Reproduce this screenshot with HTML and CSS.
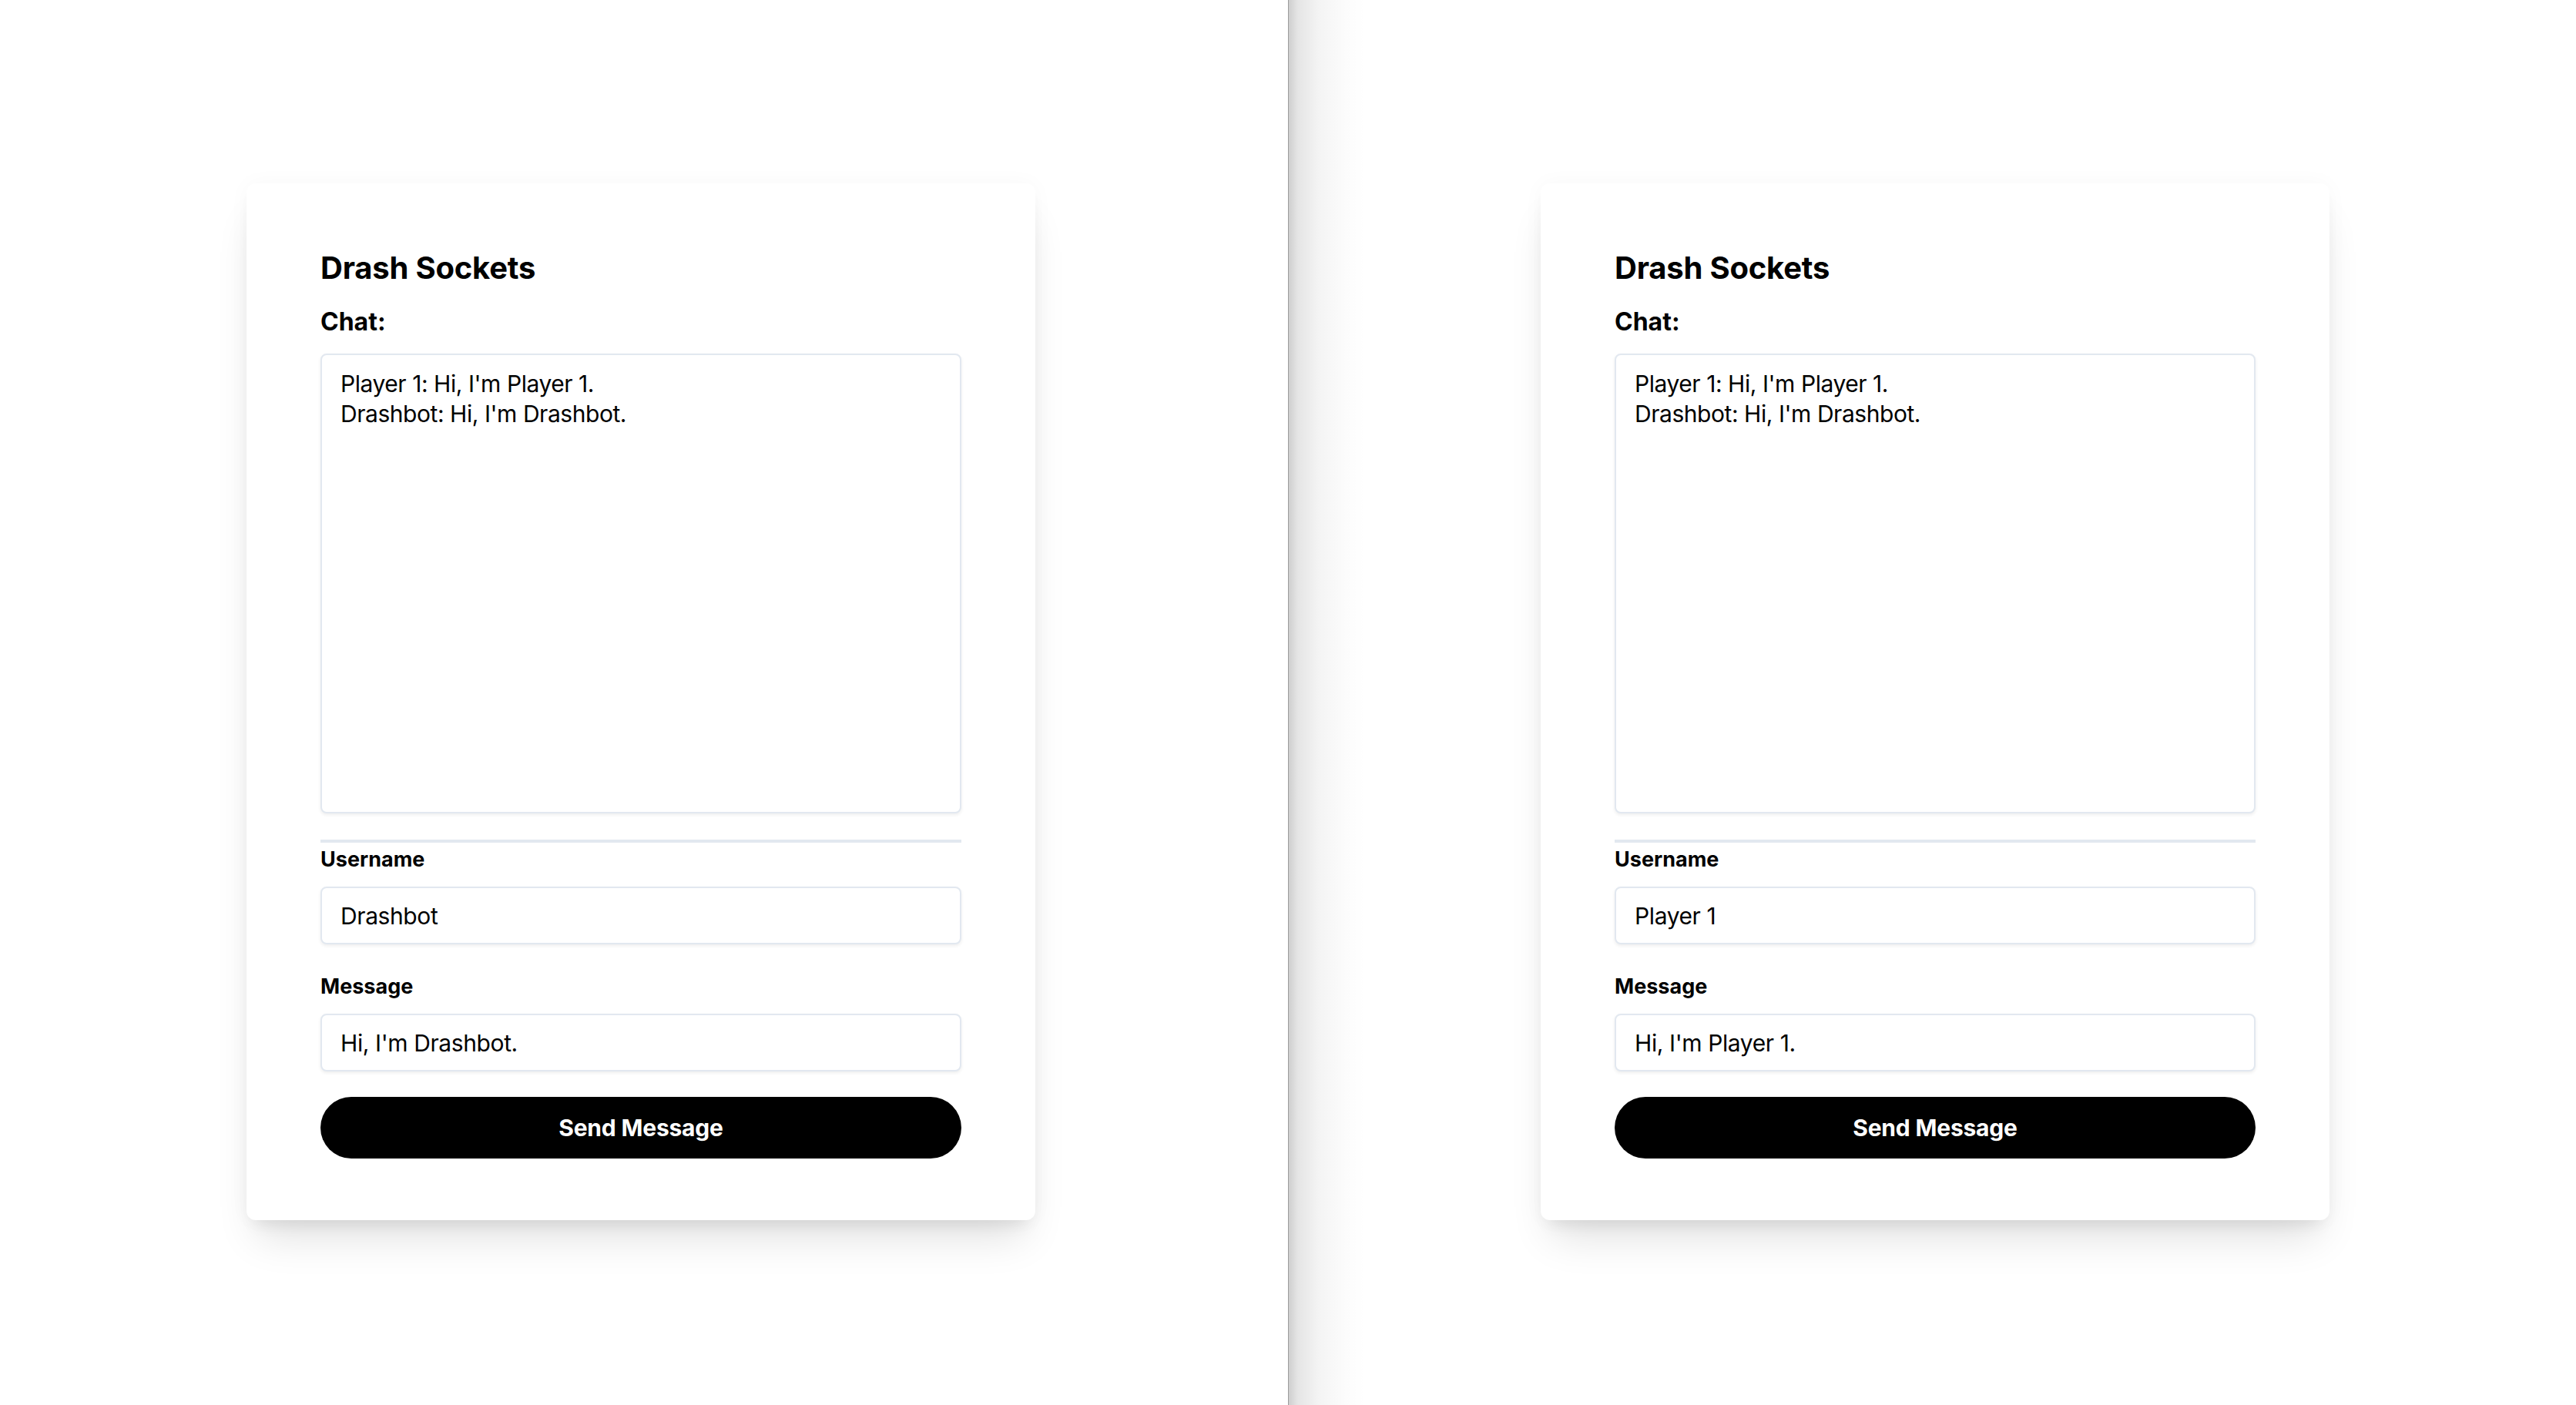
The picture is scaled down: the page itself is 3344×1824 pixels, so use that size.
FILE: index.html
```html
<!DOCTYPE html>
<html lang="en">
<head>
<meta charset="utf-8">
<title>Drash Sockets</title>
<link rel="stylesheet" href="styles.css">
</head>
<body>
<div class="split">
  <section class="pane pane-left">
    <div class="card">
      <h1 class="title">Drash Sockets</h1>
      <label class="chat-label">Chat:</label>
      <textarea class="chat-box" readonly>Player 1: Hi, I'm Player 1.
Drashbot: Hi, I'm Drashbot.</textarea>
      <hr class="rule">
      <label class="field-label">Username</label>
      <input class="field" type="text" value="Drashbot">
      <label class="field-label field-label-gap">Message</label>
      <input class="field" type="text" value="Hi, I'm Drashbot.">
      <button class="send" type="button">Send Message</button>
    </div>
  </section>
  <div class="divider"></div>
  <section class="pane pane-right">
    <div class="card">
      <h1 class="title">Drash Sockets</h1>
      <label class="chat-label">Chat:</label>
      <textarea class="chat-box" readonly>Player 1: Hi, I'm Player 1.
Drashbot: Hi, I'm Drashbot.</textarea>
      <hr class="rule">
      <label class="field-label">Username</label>
      <input class="field" type="text" value="Player 1">
      <label class="field-label field-label-gap">Message</label>
      <input class="field" type="text" value="Hi, I'm Player 1.">
      <button class="send" type="button">Send Message</button>
    </div>
  </section>
</div>
</body>
</html>
```

FILE: styles.css
```css
html, body {
  margin: 0;
  padding: 0;
  background: #ffffff;
}

body {
  width: 3344px;
  height: 1824px;
  overflow: hidden;
  font-family: "Inter", "Noto Sans", "Liberation Sans", sans-serif;
  color: #000000;
}

.split {
  display: flex;
  height: 1824px;
}

.pane {
  flex: 0 0 auto;
  box-sizing: border-box;
  padding-top: 238px;
  height: 100%;
}

.pane-left {
  width: 1672px;
  padding-left: 320px;
  background: #ffffff;
}

.divider {
  flex: 0 0 1px;
  width: 1px;
  background: #9c9c9c;
}

.pane-right {
  width: 1671px;
  padding-left: 327px;
  background: linear-gradient(to right,
    rgba(0, 0, 0, 0.19) 0px,
    rgba(0, 0, 0, 0.10) 12px,
    rgba(0, 0, 0, 0.045) 40px,
    rgba(0, 0, 0, 0.012) 75px,
    rgba(0, 0, 0, 0) 100px);
}

.card {
  width: 1024px;
  box-sizing: border-box;
  padding: 82px 96px 80px 96px;
  background: #ffffff;
  border-radius: 12px;
  display: flex;
  flex-direction: column;
  box-shadow: 0 36px 50px -14px rgba(0, 0, 0, 0.12),
              0 14px 22px -10px rgba(0, 0, 0, 0.08),
              0 0 28px rgba(0, 0, 0, 0.03);
}

.title {
  margin: 0;
  font-size: 40px;
  line-height: 56px;
  font-weight: 700;
  letter-spacing: -0.2px;
}

.chat-label {
  margin-top: 18px;
  font-size: 32px;
  line-height: 48px;
  font-weight: 700;
}

.chat-box {
  margin-top: 17px;
  height: 597px;
  box-sizing: border-box;
  width: 100%;
  padding: 18px 24px 14px 24px;
  border: 2px solid #e2e8f0;
  border-radius: 8px;
  box-shadow: 0 2px 4px rgba(0, 0, 0, 0.07);
  font-family: inherit;
  font-size: 30px;
  line-height: 39px;
  letter-spacing: -0.45px;
  color: #000000;
  background: #ffffff;
  resize: none;
  outline: none;
  overflow: hidden;
}

.rule {
  margin: 34px 0 0 0;
  height: 0;
  border: 0;
  border-top: 4px solid #e2e8f0;
}

.field-label {
  margin-top: 2px;
  font-size: 27px;
  line-height: 40px;
  font-weight: 700;
}

.field-label-gap {
  margin-top: 35px;
}

.field {
  margin-top: 15px;
  height: 75px;
  box-sizing: border-box;
  width: 100%;
  padding: 0 24px;
  border: 2px solid #e2e8f0;
  border-radius: 8px;
  box-shadow: 0 2px 4px rgba(0, 0, 0, 0.07);
  font-family: inherit;
  font-size: 30px;
  letter-spacing: -0.4px;
  color: #000000;
  background: #ffffff;
  outline: none;
}

.send {
  margin-top: 33px;
  height: 80px;
  width: 100%;
  border: 0;
  border-radius: 9999px;
  background: #000000;
  color: #ffffff;
  font-family: inherit;
  font-size: 30px;
  font-weight: 700;
  letter-spacing: -0.2px;
  cursor: pointer;
}
```
